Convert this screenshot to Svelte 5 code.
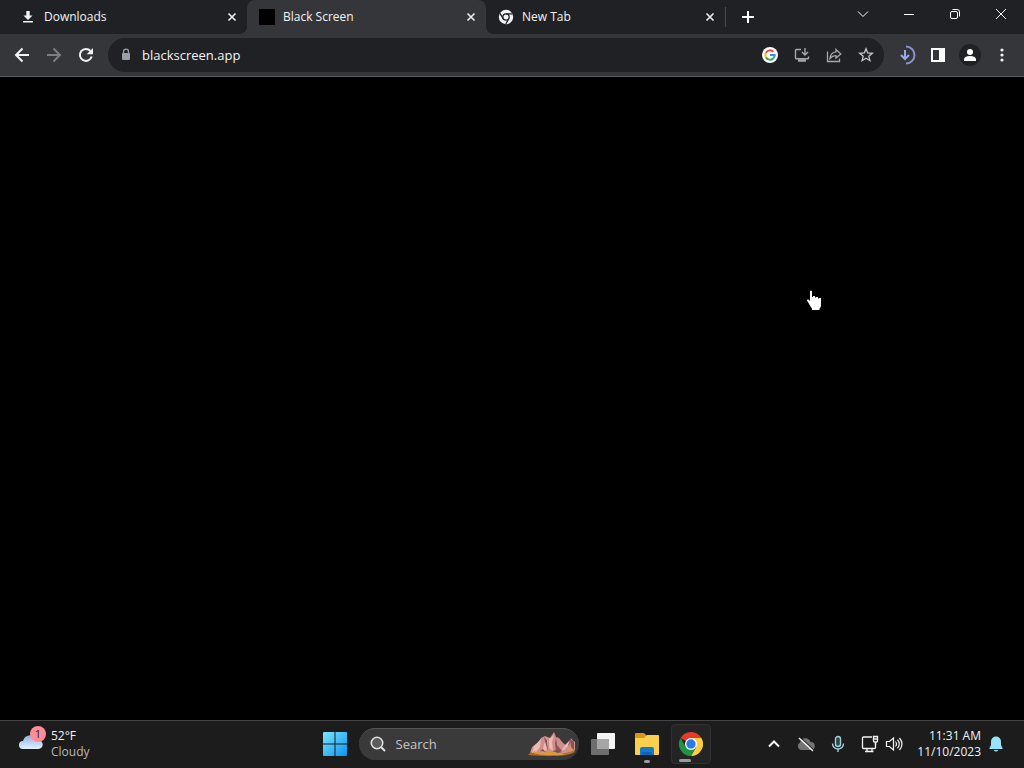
<script>
  let address = $state('blackscreen.app');
  let query = $state('');
  let active = $state(2);

  const tabs = [
    { id: 1, title: 'Downloads', icon: 'download' },
    { id: 2, title: 'Black Screen', icon: 'black' },
    { id: 3, title: 'New Tab', icon: 'chrome' }
  ];
</script>

<div class="desktop">
  <header class="tab-strip">
    <div class="tabs">
      {#each tabs as tab (tab.id)}
        <div class="tab" class:active={tab.id === active}>
          <button class="tab-label" onclick={() => (active = tab.id)}>
            {#if tab.icon === 'download'}
              <svg width="16" height="16" viewBox="0 0 16 16" fill="#f1f3f4">
                <path d="M6.3 2h3.4v4.4h2.8L8 10.9 3.5 6.4h2.8zM3 12h10v1.6H3z" />
              </svg>
            {:else if tab.icon === 'black'}
              <span class="black-icon"></span>
            {:else}
              <svg width="16" height="16" viewBox="0 0 16 16">
                <circle cx="8" cy="8" r="7.2" fill="#f1f3f4" />
                <circle cx="8" cy="8" r="3.2" fill="none" stroke="#202124" stroke-width="1.3" />
                <path d="M8 4.8h6.2M5.2 9.6 2 4.3M10.8 9.6 7.8 15" stroke="#202124" stroke-width="1.3" />
              </svg>
            {/if}
            <span>{tab.title}</span>
          </button>
          <button class="tab-close" aria-label="Close {tab.title}">
            <svg width="16" height="16" viewBox="0 0 16 16" stroke="#e8eaed" stroke-width="1.7">
              <path d="m4.5 4.5 7 7m0-7-7 7" />
            </svg>
          </button>
        </div>
      {/each}
    </div>
    <span class="separator"></span>
    <button class="icon-button new-tab" aria-label="New tab">
      <svg width="16" height="16" viewBox="0 0 16 16" stroke="#fff" stroke-width="2">
        <path d="M8 2v12M2 8h12" />
      </svg>
    </button>
    <div class="window-controls">
      <button aria-label="Search tabs">
        <svg width="12" height="12" viewBox="0 0 12 12"><path d="m1 3.5 5 5 5-5" /></svg>
      </button>
      <button aria-label="Minimize">
        <svg width="12" height="12" viewBox="0 0 12 12"><path d="M1 6.5h10" /></svg>
      </button>
      <button aria-label="Restore">
        <svg width="12" height="12" viewBox="0 0 12 12">
          <rect x="1.5" y="3.5" width="7" height="7" rx="1.5" />
          <path d="M3.5 1.5h4.7a2.3 2.3 0 0 1 2.3 2.3v4.7" />
        </svg>
      </button>
      <button aria-label="Close window">
        <svg width="12" height="12" viewBox="0 0 12 12"><path d="m1 1 10 10M11 1 1 11" /></svg>
      </button>
    </div>
  </header>

  <nav class="toolbar">
    <div class="group">
      <button class="icon-button" aria-label="Back">
        <svg width="16" height="16" viewBox="0 0 16 16" fill="none" stroke="#f1f3f4" stroke-width="2">
          <path d="M15 8H2.5M8.5 1.5 2 8l6.5 6.5" />
        </svg>
      </button>
      <button class="icon-button" aria-label="Forward" disabled>
        <svg width="16" height="16" viewBox="0 0 16 16" fill="none" stroke="#7d7e82" stroke-width="2">
          <path d="M1 8h12.5M7.5 1.5 14 8l-6.5 6.5" />
        </svg>
      </button>
      <button class="icon-button" aria-label="Reload">
        <svg width="16" height="16" viewBox="0 0 16 16">
          <path d="M13.7 9.5A6 6 0 1 1 12.5 4" fill="none" stroke="#f1f3f4" stroke-width="2" />
          <path d="M15 1v6.3H8.7z" fill="#f1f3f4" />
        </svg>
      </button>
    </div>

    <div class="omnibox">
      <svg width="12" height="14" viewBox="0 0 12 14">
        <path d="M3.5 6V3.7a2.5 2.5 0 0 1 5 0V6" fill="none" stroke="#9aa0a6" stroke-width="1.3" />
        <rect x="2" y="5" width="8" height="7" rx="1" fill="#9aa0a6" />
      </svg>
      <input type="text" aria-label="Address" bind:value={address} />
      <button class="icon-button" aria-label="Search with Google">
        <svg width="16" height="16" viewBox="0 0 16 16" fill="none" stroke-width="2">
          <circle cx="8" cy="8" r="8" fill="#fff" />
          <path d="M11.3 4.7A4.7 4.7 0 0 0 3.9 5.7" stroke="#ea4335" />
          <path d="M3.9 5.7a4.7 4.7 0 0 0 0 4.6" stroke="#fbbc05" />
          <path d="M3.9 10.3a4.7 4.7 0 0 0 7.3 1.1" stroke="#34a853" />
          <path d="M11.2 11.4A4.7 4.7 0 0 0 12.7 8H8" stroke="#4285f4" />
        </svg>
      </button>
      <button class="icon-button" aria-label="Install app">
        <svg width="16" height="16" viewBox="0 0 16 16" fill="none" stroke="#a4a7ab" stroke-width="1.4">
          <path d="M7 2.5H2.3Q1.5 2.5 1.5 3.3V11q0 .8.8.8h11.4q.8 0 .8-.8V9.5" />
          <path d="M11 1v6.5M8 5l3 3 3-3" />
          <path d="M4 13.5h8" stroke-width="2.5" />
        </svg>
      </button>
      <button class="icon-button" aria-label="Share">
        <svg width="16" height="16" viewBox="0 0 16 16" fill="none" stroke="#a4a7ab" stroke-width="1.3">
          <path d="M1.5 4.5v10h12v-3" />
          <path d="M10 2.5 14.8 7 10 11V8.7Q6.5 8.5 4 11.5 4.5 5.5 10 4.8z" />
        </svg>
      </button>
      <button class="icon-button" aria-label="Bookmark this tab">
        <svg width="16" height="16" viewBox="0 0 16 16" fill="none" stroke="#c4c7ca" stroke-width="1.3">
          <path d="m8 1.8 1.7 4.2 4.6.3-3.5 2.9 1.1 4.5L8 11.2l-3.9 2.5 1.1-4.5-3.5-2.9 4.6-.3z" />
        </svg>
      </button>
    </div>

    <div class="group">
      <button class="icon-button" aria-label="Downloads">
        <svg width="20" height="20" viewBox="0 0 20 20" fill="none" stroke="#98a7e8" stroke-width="2">
          <path d="M10 1.5a8.5 8.5 0 0 1 0 17" stroke="#8792c9" />
          <path d="M9 5v9M5 10l4 4 4-4" />
        </svg>
      </button>
      <button class="icon-button" aria-label="Side panel">
        <svg width="16" height="16" viewBox="0 0 16 16">
          <path d="M1 1h14v14H1z" fill="#fff" />
          <path d="M3 3h6v10H3z" fill="#35363a" />
        </svg>
      </button>
      <button class="icon-button" aria-label="Profile">
        <svg width="24" height="24" viewBox="0 0 24 24" fill="#fff">
          <circle cx="12" cy="12" r="11" fill="#202124" />
          <circle cx="12" cy="9" r="3" />
          <path d="M6 18v-1.5q0-3.5 6-3.5t6 3.5V18z" />
        </svg>
      </button>
      <button class="icon-button" aria-label="Menu">
        <svg width="16" height="16" viewBox="0 0 16 16" fill="#f1f3f4">
          <circle cx="8" cy="3" r="1.6" />
          <circle cx="8" cy="8" r="1.6" />
          <circle cx="8" cy="13" r="1.6" />
        </svg>
      </button>
    </div>
  </nav>

  <main>
    <svg class="pointer" width="18" height="22" viewBox="0 0 18 22" fill="#fff">
      <path d="M4 1q1-1 2 0V7h1V6h2v1.5h1V7h2v1.5h1V8h2v8q-.5 1.5-1.500 2.5V20H6v-1.5Q4 16 2 12L.8 10.5Q1 9 2.5 9.500L4 11z" />
    </svg>
  </main>

  <footer class="taskbar">
    <button class="weather">
      <svg width="30" height="36" viewBox="0 0 30 36">
        <defs>
          <linearGradient id="cloud" x1="0" y1="0" x2="0" y2="1">
            <stop offset="0" stop-color="#8fb2e4" />
            <stop offset="1" stop-color="#e4effc" />
          </linearGradient>
        </defs>
        <path d="M5 23a4 4 0 0 1 0-8 8 8 0 0 1 15-1 4.500 4.500 0 0 1 .5 9z" fill="url(#cloud)" />
        <circle cx="20" cy="8" r="8" fill="#ff8c96" />
        <text x="20" y="12" text-anchor="middle">1</text>
      </svg>
      <span class="weather-text">
        <span>52°F</span>
        <span class="muted">Cloudy</span>
      </span>
    </button>

    <div class="apps">
      <button class="app" aria-label="Start">
        <svg width="24" height="24" viewBox="0 0 24 24">
          <defs>
            <linearGradient id="win" x1="0" y1="0" x2="1" y2="1">
              <stop offset="0" stop-color="#7be6ff" />
              <stop offset="1" stop-color="#0a93ee" />
            </linearGradient>
          </defs>
          <path d="M1 0h10.5v11.5H0V1q0-1 1-1M12.5 0H23q1 0 1 1v10.5H12.5zM0 12.5h11.5V24H1q-1 0-1-1zM12.5 12.5H24V23q0 1-1 1H12.5z" fill="url(#win)" />
        </svg>
      </button>
      <label class="search">
        <svg width="16" height="16" viewBox="0 0 16 16" fill="#5c5c5c" stroke="#e0e0e0" stroke-width="1.6">
          <circle cx="7" cy="7" r="5.7" />
          <path d="m11 11 4 4" stroke-width="2" />
        </svg>
        <input type="text" placeholder="Search" aria-label="Search" bind:value={query} />
        <svg width="48" height="26" viewBox="0 0 48 26">
          <path d="M0 24 4 20l20-1 22-1 1 3q-6 4-22 4T0 24" fill="#a86a20" />
          <path d="m2 22 2-6 4-3 2-1 3-5 4-2 5 2 2-3 2-3 2 5 3 1 4 5 4 3 2-1 2-7 3 4 1-1v9q-7 4-23 4-12 1-22-2" fill="#cf8f8c" />
          <path d="m13 8-1 8-4 5-4 1 2-7zM19 7l1 6-2 7-4 2 2-9zM26 4l-2 7 1 9-4-3V8zM42 9l-2 6-4 4-3 1 4-6z" fill="#edb9b2" />
          <path d="m28 7 1 7 5 6-6 1-1-9zM16 6l2 8 2 6-1-11zM42 8l1 8 3 3V11z" fill="#8d5156" />
          <path d="M6 20q6 3 13 1t14 1 12-2q-7 5-20 4-11 1-20-2z" fill="#dc9a38" />
          <path d="m24 20 5-1 5 2-4 1zM12 20l3-2 3 3z" fill="#7d4f55" />
          <path d="m40 18 2-2 3 3-3 1z" fill="#d8a04a" />
        </svg>
      </label>
      <button class="app" aria-label="Task view">
        <svg width="24" height="24" viewBox="0 0 24 24">
          <rect x="6" y="1" width="18" height="16" rx="1" fill="#f4f4f4" />
          <rect x="0" y="7" width="18" height="16" rx="1" fill="#6e6e6e" />
          <path d="M6 7h12v10H6z" fill="#a6a6a6" />
        </svg>
      </button>
      <button class="app" aria-label="File Explorer">
        <svg width="24" height="24" viewBox="0 0 24 24">
          <path d="M0 5V2q0-1 1-1h8l3 3v4H0z" fill="#d9961c" />
          <path d="M0 6h9l3-3h11q1 0 1 1v18q0 1-1 1H1q-1 0-1-1z" fill="#fad04f" />
          <path d="M5 23v-6q0-2 2-2h10q2 0 2 2v6z" fill="#1479cc" />
          <path d="M7 20h10v3H7z" fill="#0e64b0" />
        </svg>
        <span class="running"></span>
      </button>
      <button class="app current" aria-label="Google Chrome">
        <svg width="24" height="24" viewBox="0 0 24 24">
          <path d="M12 12 1.6 6a12 12 0 0 1 20.8 0z" fill="#e33b2e" />
          <path d="M12 6h10.4A12 12 0 0 1 12 24l5.2-9z" fill="#ffcd40" />
          <path d="M1.6 6 6.8 15 12 18l5.2-3L12 24A12 12 0 0 1 1.6 6" fill="#229342" />
          <circle cx="12" cy="12" r="6" fill="#fff" />
          <circle cx="12" cy="12" r="4.7" fill="#267be9" />
        </svg>
        <span class="running wide"></span>
      </button>
    </div>

    <div class="tray">
      <button class="tray-button" aria-label="Show hidden icons">
        <svg width="12" height="12" viewBox="0 0 12 12" stroke-width="2"><path d="m1 8.5 5-5 5 5" /></svg>
      </button>
      <button class="tray-button" aria-label="OneDrive">
        <svg width="18" height="16" viewBox="0 0 18 16">
          <path d="M4 14a4 4 0 0 1-1-7.5 5.5 5.5 0 0 1 10.5-.5A4 4 0 0 1 14 14z" fill="#747474" stroke="none" />
          <path d="m3 1 14 13" stroke="#1c1c1c" />
          <path d="m2 2 14 13" stroke-width="1.4" />
        </svg>
      </button>
      <button class="tray-button" aria-label="Microphone">
        <svg width="14" height="18" viewBox="0 0 14 18">
          <g stroke="#a0d2d8" stroke-width="1.4">
            <rect x="4.5" y="1.5" width="5" height="10" rx="2.5" fill="#2c4548" />
            <path d="M1.5 8.5a5.5 5.5 0 0 0 11 0M7 14v3" />
          </g>
        </svg>
      </button>
      <div class="tray-pair">
        <button class="tray-button" aria-label="Network">
          <svg width="18" height="18" viewBox="0 0 18 18" stroke-width="1.3">
            <path d="M11 2H2.5Q1.5 2 1.5 3v9.5q0 1 1 1h11q1 0 1-1V8M6 13.5v3m5-3v3M4 16.5h8.5" />
            <path d="M12.5 1.5h4V6q0 1-1 1h-2q-1 0-1-1zM12.5 4h4M14.5 7v3" />
          </svg>
        </button>
        <button class="tray-button" aria-label="Volume">
          <svg width="18" height="16" viewBox="0 0 18 16" stroke-width="1.2">
            <path d="M1.5 5.5h3l4-3.5v12l-4-3.5h-3z" />
            <path d="M10.5 5.5q2 2.5 0 5M12.5 3.7q3.5 4.3 0 8.6M14.5 2q5 6 0 12" />
          </svg>
        </button>
      </div>
      <button class="clock">
        <span>11:31 AM</span>
        <span>11/10/2023</span>
      </button>
      <button class="bell" aria-label="Notifications">
        <svg width="14" height="16" viewBox="0 0 14 16">
          <path d="M7 .5A5 5 0 0 0 2 5.5V9L.5 12v1h13v-1L12 9V5.5A5 5 0 0 0 7 .5M4.5 14q2.5 3 5 0z" fill="#97e4fa" stroke="none" />
        </svg>
      </button>
    </div>
  </footer>
</div>

<style>
  :global(body) {
    background: #000;
  }

  .desktop {
    min-height: 100vh;
    display: flex;
    flex-direction: column;
    font-family: 'Segoe UI', 'Open Sans', 'Noto Sans', sans-serif;
    font-size: 12px;
    line-height: 16px;
    color: #f1f3f4;
  }

  button,
  input {
    font: inherit;
    color: inherit;
    background: none;
    border: 0;
    padding: 0;
    margin: 0;
  }

  svg {
    display: block;
    flex: none;
  }

  /* Tab strip */
  .tab-strip {
    display: flex;
    align-items: center;
    height: 34px;
    padding-left: 8px;
    background: #202124;
  }

  .tabs {
    display: flex;
    flex: 0 1 717px;
    height: 100%;
    min-width: 0;
  }

  .tab {
    flex: 1;
    min-width: 0;
    display: flex;
    align-items: center;
    padding: 0 7px 0 12px;
    position: relative;
  }

  .tab.active {
    background: #35363a;
    border-radius: 8px 8px 0 0;
  }

  .tab.active::before,
  .tab.active::after {
    content: '';
    position: absolute;
    bottom: 0;
    width: 8px;
    height: 8px;
  }

  .tab.active::before {
    right: 100%;
    background: radial-gradient(circle at 0 0, transparent 8px, #35363a 8px);
  }

  .tab.active::after {
    left: 100%;
    background: radial-gradient(circle at 100% 0, transparent 8px, #35363a 8px);
  }

  .tab-label {
    flex: 1;
    min-width: 0;
    height: 100%;
    display: flex;
    align-items: center;
    gap: 8px;
    white-space: nowrap;
    overflow: hidden;
  }

  .black-icon {
    width: 16px;
    height: 16px;
    background: #000;
  }

  .separator {
    width: 1px;
    height: 20px;
    background: #4a4c50;
  }

  .new-tab {
    margin-left: 8px;
  }

  .window-controls {
    display: flex;
    align-self: flex-start;
    margin-left: auto;
  }

  .window-controls button {
    width: 46px;
    height: 28px;
    display: grid;
    place-items: center;
  }

  .window-controls svg {
    fill: none;
    stroke: #fff;
    stroke-width: 1;
  }

  /* Toolbar */
  .toolbar {
    display: flex;
    align-items: center;
    gap: 8px;
    height: 42px;
    padding: 0 8px;
    background: #35363a;
    border-bottom: 1px solid #5b5c5f;
  }

  .group {
    display: flex;
    gap: 4px;
  }

  .icon-button {
    width: 28px;
    height: 28px;
    display: grid;
    place-items: center;
    border-radius: 50%;
  }

  .omnibox {
    flex: 1;
    min-width: 0;
    height: 34px;
    display: flex;
    align-items: center;
    gap: 4px;
    padding: 0 4px 0 12px;
    box-sizing: border-box;
    border-radius: 17px;
    background: #202124;
  }

  .omnibox input {
    flex: 1;
    min-width: 0;
    padding-left: 6px;
    font-size: 13px;
    outline: 0;
  }

  main {
    flex: 1;
    position: relative;
    background: #000;
  }

  .pointer {
    position: absolute;
    left: 806px;
    top: 213px;
  }

  /* Taskbar */
  .taskbar {
    display: grid;
    grid-template-columns: 1fr auto 1fr;
    align-items: center;
    height: 45px;
    padding-bottom: 2px;
    background: #1c1c1c;
    border-top: 1px solid #444;
  }

  .weather {
    justify-self: start;
    display: flex;
    align-items: center;
    gap: 3px;
    padding-left: 18px;
    text-align: left;
  }

  .weather text {
    font-size: 11px;
    fill: #2a1a1c;
  }

  .weather-text,
  .clock {
    display: flex;
    flex-direction: column;
  }

  .muted {
    color: #b8b8b8;
  }

  .apps {
    display: flex;
    align-items: center;
    gap: 4px;
    padding-left: 1px;
  }

  .app {
    width: 40px;
    height: 40px;
    display: grid;
    place-items: center;
    box-sizing: border-box;
    border-radius: 4px;
    position: relative;
  }

  .app.current {
    background: #242424;
    border: 1px solid #303030;
  }

  .running {
    position: absolute;
    bottom: 1px;
    left: 50%;
    width: 6px;
    height: 3px;
    margin-left: -3px;
    border-radius: 2px;
    background: #9a9a9a;
  }

  .running.wide {
    width: 12px;
    margin-left: -12px;
  }

  .search {
    width: 220px;
    height: 32px;
    display: flex;
    align-items: center;
    gap: 10px;
    padding: 0 3px 0 11px;
    box-sizing: border-box;
    border-radius: 16px;
    border-top: 1px solid #555;
    background: #3a3a3a;
  }

  .search input {
    flex: 1;
    min-width: 0;
    font-size: 13px;
    outline: 0;
  }

  .search input::placeholder {
    color: #c4c4c4;
    opacity: 1;
  }

  .tray {
    justify-self: end;
    display: flex;
    align-items: center;
    padding-right: 18px;
  }

  .tray svg {
    fill: none;
    stroke: #f4f4f4;
  }

  .tray-button {
    width: 32px;
    height: 32px;
    display: grid;
    place-items: center;
  }

  .tray-pair {
    display: flex;
    padding-left: 4px;
  }

  .tray-pair .tray-button {
    width: 24px;
  }

  .clock {
    width: 75px;
    text-align: right;
  }

  .bell {
    width: 20px;
    margin-left: 5px;
    display: grid;
    place-items: center;
  }
</style>
